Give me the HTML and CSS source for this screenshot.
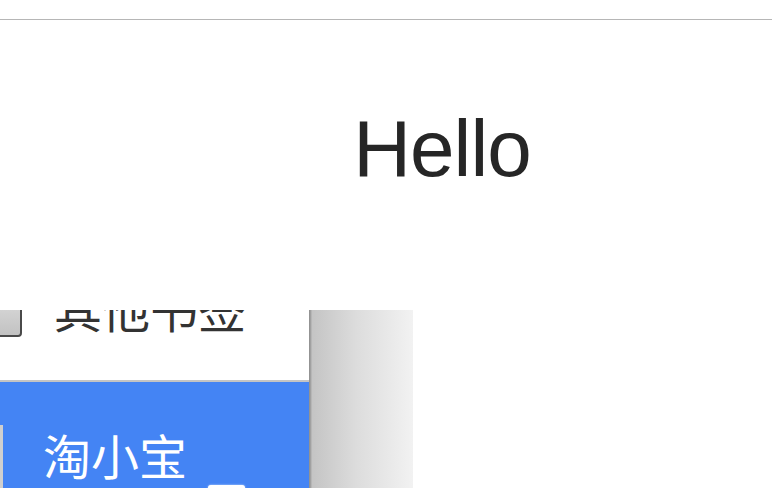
FILE: index.html
```html
<!DOCTYPE html>
<html lang="zh">
<head>
<meta charset="utf-8">
<title>Hello</title>
<link rel="stylesheet" href="styles.css">
</head>
<body>
<header class="topbar"></header>
<section class="hero">
  <h1 class="title">Hello</h1>
</section>
<figure class="shot">
  <div class="menu">
    <div class="item item-plain">
      <span class="checkbox"></span>
      <span class="label">其他书签</span>
    </div>
    <div class="item item-active">
      <span class="label label-active">淘小宝</span>
      <span class="stub"></span>
    </div>
  </div>
  <div class="shadow"></div>
</figure>
</body>
</html>
```
FILE: styles.css
```css
html, body {
  margin: 0;
  padding: 0;
  background: #ffffff;
  font-family: "Liberation Sans", Arial, "Noto Sans CJK SC", sans-serif;
}

.topbar {
  height: 19px;
  border-bottom: 1px solid #b6b6b6;
}

.hero {
  display: flex;
  justify-content: center;
  padding: 89px 0 121px 112px;
}

.title {
  margin: 0;
  font-size: 80px;
  line-height: 80px;
  font-weight: 400;
  color: #262626;
  letter-spacing: -1px;
}

.shot {
  margin: 0;
  display: flex;
  width: 413px;
  height: 178px;
  overflow: hidden;
}

.menu {
  width: 309px;
  display: flex;
  flex-direction: column;
}

.item {
  display: flex;
  flex: none;
  font-family: "Noto Sans CJK SC", "Noto Sans CJK JP", sans-serif;
  font-size: 48px;
  line-height: 48px;
}

.item-plain {
  height: 70px;
  align-items: flex-start;
  background: #ffffff;
  border-bottom: 2px solid #c4c4c4;
}

.checkbox {
  flex: none;
  width: 22px;
  height: 30px;
  margin-top: -7px;
  margin-left: -4px;
  border: 2px solid #4a4a4a;
  border-radius: 0 0 4px 0;
  background: linear-gradient(#d6d6d6, #c2c2c2);
}

.item-plain .label {
  margin-top: -27px;
  margin-left: 32px;
  color: #333333;
  white-space: nowrap;
}

.item-active {
  flex-direction: column;
  min-height: 120px;
  background: linear-gradient(#cfcfcf, #cfcfcf) no-repeat 0 43px / 3px 100%, #4484f4;
}

.label-active {
  margin-top: 48px;
  margin-left: 43px;
  color: #ffffff;
  white-space: nowrap;
}

.stub {
  display: block;
  width: 37px;
  height: 12px;
  margin-top: 7px;
  margin-left: 208px;
  background: #ffffff;
  border-radius: 3px 3px 0 0;
  box-shadow: 0 0 2px rgba(255, 255, 255, 0.8);
}

.shadow {
  width: 104px;
  background: linear-gradient(to right, #8c8c8c 0, #a8a8a8 2px, #c4c4c4 3px, #dcdcdc 45%, #f2f2f2 100%);
}
```
